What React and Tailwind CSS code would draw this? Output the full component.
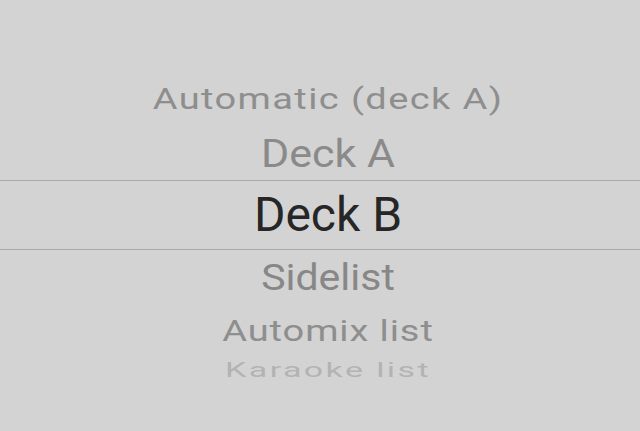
const items = [
  { label: 'Automatic (deck A)', row: 'h-[54px]', text: 'text-[38px] scale-y-[0.8] text-[#8e8e8e] tracking-[1.4px]' },
  { label: 'Deck A', row: 'h-[54px]', text: 'text-[43px] scale-y-[0.9] text-[#8a8a8a]' },
];

const after = [
  { label: 'Sidelist', row: 'h-[55px]', text: 'text-[41px] scale-y-[0.9] text-[#878787]' },
  { label: 'Automix list', row: 'h-[52px]', text: 'text-[38px] scale-y-[0.78] text-[#8e8e8e] tracking-[0.9px]' },
  { label: 'Karaoke list', row: 'h-[26px]', text: 'text-[34px] scale-y-[0.6] text-[#b3b3b3] tracking-[2.4px]' },
];

const Row = ({ item }) => (
  <div className={`flex items-center justify-center pl-[16px] ${item.row}`}>
    <span className={`leading-none whitespace-nowrap ${item.text}`}>{item.label}</span>
  </div>
);

export default function App() {
  return (
    <div
      className="w-[640px] h-[431px] bg-[#d3d3d3] flex flex-col pt-[72px] overflow-hidden"
      style={{ fontFamily: 'Roboto, "Noto Sans", sans-serif' }}
    >
      {items.map((it) => (
        <Row key={it.label} item={it} />
      ))}
      <div className="h-[70px] border-y border-[#a9a9a9] flex items-center justify-center pl-[16px]">
        <span className="text-[48px] leading-none text-[#262626]">Deck B</span>
      </div>
      {after.map((it) => (
        <Row key={it.label} item={it} />
      ))}
    </div>
  );
}
